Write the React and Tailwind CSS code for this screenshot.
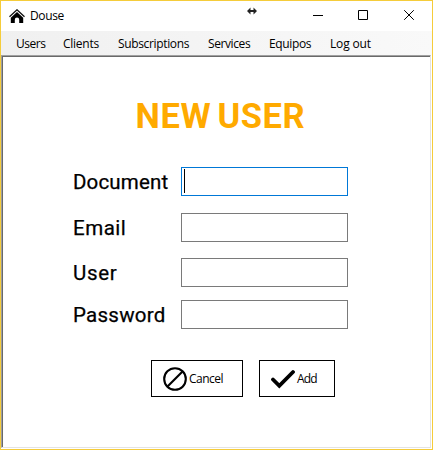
const MENU = [
  { label: 'Users', cls: 'w-[47px] tracking-[-0.45px]' },
  { label: 'Clients', cls: 'w-[55px] tracking-[-0.25px]' },
  { label: 'Subscriptions', cls: 'w-[90px] tracking-[-0.35px]' },
  { label: 'Services', cls: 'w-[61px] tracking-[-0.4px]' },
  { label: 'Equipos', cls: 'w-[61px] tracking-[-0.35px]' },
  { label: 'Log out', cls: 'tracking-[-0.15px]' },
];

const FIELDS = [
  { label: 'Document', row: 'mt-[31px]', text: 'tracking-[0.15px]', border: 'border-[#0078d7]', focused: true },
  { label: 'Email', row: 'mt-[17px]', text: 'tracking-[0.5px]', border: 'border-[#7a7a7a]' },
  { label: 'User', row: 'mt-4', text: 'tracking-[0.7px]', border: 'border-[#7a7a7a]' },
  { label: 'Password', row: 'mt-[13px]', text: 'tracking-[0.25px]', border: 'border-[#7a7a7a]' },
];

function HouseIcon() {
  return (
    <svg width="16" height="15" viewBox="0 0 16 15" className="ml-2 shrink-0">
      <path d="M0.500 7.800 8 0.800l7.500 7" fill="none" stroke="#111" strokeWidth="1.300" />
      <path d="M8 3 1.800 8.800V14h4v-3.200a2.200 2.200 0 0 1 4.400 0V14h4V8.800Z" fill="#000" />
    </svg>
  );
}

function TitleBar() {
  return (
    <header className="flex h-[30px] items-center bg-white">
      <HouseIcon />
      <span className="ml-[5px] w-[217px] text-[12px] leading-[16px] tracking-[-0.35px]">Douse</span>
      <svg width="10" height="8" viewBox="0 0 10 8" className="mb-[10px] shrink-0">
        <path d="M0 4 3.500 0.500v2.500h3V0.500L10 4 6.500 7.500V5h-3v2.500Z" fill="#222" />
      </svg>
      <svg width="102" height="12" viewBox="0 0 102 12" className="mb-[2px] ml-[56px] shrink-0" fill="none" stroke="#000">
        <path d="M0 6.500h10" />
        <path d="M45.500 1.500h9v9h-9z" />
        <path d="m91.200 1.200 9.600 9.600m0-9.600-9.600 9.600" />
      </svg>
    </header>
  );
}

function Field({ label, row, text, border, focused }) {
  return (
    <label className={`flex h-[29px] items-center ${row}`}>
      <span className={`w-[108px] shrink-0 pt-px font-[Roboto] text-[20.500px] leading-[29px] [-webkit-text-stroke:0.25px_black] ${text}`}>{label}</span>
      <span className={`flex h-[29px] w-[167px] items-center border bg-white pl-[2px] ${border}`}>
        {focused && <span className="mb-px h-6 w-px bg-black" />}
      </span>
    </label>
  );
}

export default function App() {
  return (
    <div className="flex h-[450px] w-[433px] flex-col border border-[#f5cc3a] bg-white font-['Open_Sans','Noto_Sans',sans-serif] text-black">
      <TitleBar />
      <nav className="flex h-6 items-center bg-gradient-to-r from-[#f0f0f0] to-[#f9f9f9] pt-px pl-[15px] text-[12px] leading-[16px]">
        {MENU.map(({ label, cls }) => (
          <span key={label} className={`whitespace-nowrap ${cls}`}>{label}</span>
        ))}
      </nav>
      <div className="mr-px mb-px flex-1 border border-t-[#a0a0a0] border-r-[#e3e3e3] border-b-[#e3e3e3] border-l-[#a0a0a0]">
        <main className="h-full border-t border-l border-[#696969] pl-[70px]">
          <h1 className="ml-[62.500px] pt-[39px] font-[Roboto] text-[34.500px] leading-[40px] font-bold tracking-[0.6px] [word-spacing:-3px] whitespace-nowrap text-[#ffaa00]">
            NEW USER
          </h1>
          {FIELDS.map((field) => (
            <Field key={field.label} {...field} />
          ))}
          <div className="mt-[31px] ml-[78px] flex gap-4 text-[12px]">
            <button className="flex h-[37px] w-[92px] items-center border border-black bg-white pl-[11px]">
              <svg width="24" height="24" viewBox="0 0 24 24" className="mt-px shrink-0" fill="none" stroke="#000" strokeWidth="2.100">
                <circle cx="12" cy="12" r="10.800" />
                <path d="M4.500 19.500 19.500 4.500" />
              </svg>
              <span className="ml-[2px] pt-px tracking-[-0.5px]">Cancel</span>
            </button>
            <button className="flex h-[37px] w-[76px] items-center border border-black bg-white pl-[11px]">
              <svg width="24" height="20" viewBox="0 0 24 20" className="shrink-0">
                <path d="m2 10.500 6.300 6.300L22 3" fill="none" stroke="#000" strokeWidth="3.800" strokeLinecap="round" />
              </svg>
              <span className="ml-[2px] pt-px tracking-[-0.9px]">Add</span>
            </button>
          </div>
        </main>
      </div>
    </div>
  );
}
